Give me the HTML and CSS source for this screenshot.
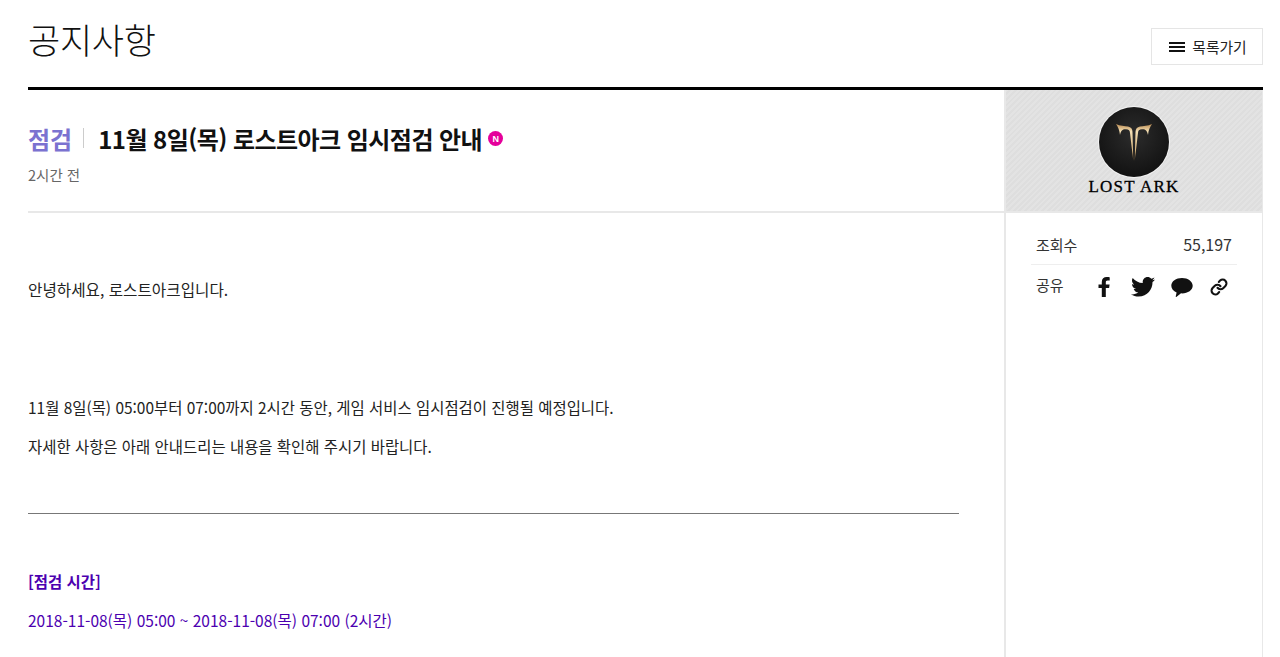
FILE: index.html
```html
<!DOCTYPE html>
<html lang="ko">
<head>
<meta charset="utf-8">
<title>공지사항</title>
<link rel="stylesheet" href="styles.css">
</head>
<body>
<div class="page">
  <header class="top">
    <h1 class="page-title">공지사항</h1>
    <a class="list-btn" href="#">
      <svg class="menu-icon" width="16" height="12" viewBox="0 0 16 12"><path d="M0 1h16v2H0zM0 5h16v2H0zM0 9h16v2H0z" fill="#111"/></svg>
      <span>목록가기</span>
    </a>
  </header>
  <div class="layout">
    <main class="main">
      <div class="article-head">
        <div class="title-row">
          <span class="category">점검</span>
          <span class="title-sep"></span>
          <h2 class="title">11월 8일(목) 로스트아크 임시점검 안내</h2>
          <span class="new-badge">N</span>
        </div>
        <div class="time">2시간 전</div>
      </div>
      <article class="article">
        <p class="p first">안녕하세요, 로스트아크입니다.</p>
        <p class="p gap">11월 8일(목) 05:00부터 07:00까지 2시간 동안, 게임 서비스 임시점검이 진행될 예정입니다.</p>
        <p class="p">자세한 사항은 아래 안내드리는 내용을 확인해 주시기 바랍니다.</p>
        <hr class="rule">
        <p class="p purple strong">[점검 시간]</p>
        <p class="p purple date">2018-11-08(목) 05:00 ~ 2018-11-08(목) 07:00 (2시간)</p>
      </article>
    </main>
    <aside class="side">
      <div class="logo-box">
        <div class="logo-circle">
          <svg width="36" height="38" viewBox="0 0 36 38">
            <defs><linearGradient id="gold" x1="0" y1="0" x2="0" y2="1"><stop offset="0" stop-color="#b98a50"/><stop offset=".2" stop-color="#f5e0b5"/><stop offset=".75" stop-color="#d8b47c"/><stop offset="1" stop-color="#7a5a30"/></linearGradient></defs>
            <path d="M0 1C4 3 9 3 12 3.500 15 4 16.500 6 16.500 9L17.300 38 14 10C13.800 7.500 13 6.500 10 6.300 7 6 5 7 4 12 3.500 7 2 4 0 1zM36 1C32 3 27 3 24 3.500 21 4 19.500 6 19.500 9L18.700 38 22 10C22.200 7.500 23 6.500 26 6.300 29 6 31 7 32 12 32.500 7 34 4 36 1z" fill="url(#gold)"/>
          </svg>
        </div>
        <div class="logo-text">LOST ARK</div>
      </div>
      <div class="stats">
        <div class="stat-row views">
          <span>조회수</span>
          <span class="num">55,197</span>
        </div>
        <div class="stat-row share">
          <span>공유</span>
          <div class="share-icons">
            <svg class="ic-fb" width="13" height="20" viewBox="0 0 13 20"><path d="M3.800 20v-9H.5V7.500h3.300V5c0-3.200 2-5 4.900-5 1.400 0 2.600.1 3 .2v3.400h-2c-1.600 0-1.900.8-1.900 1.900v2h3.800l-.5 3.500H7.800v9z" fill="#111"/></svg>
            <svg class="ic-tw" width="24" height="20" viewBox="0 0 24 20"><path d="M24 2.400c-.9.400-1.800.7-2.800.8 1-.6 1.800-1.600 2.200-2.700-1 .6-2 1-3.100 1.200C19.300.7 18 0 16.600 0c-2.700 0-4.900 2.200-4.900 4.900 0 .4 0 .8.100 1.100C7.700 5.800 4.100 3.900 1.700.9 1.200 1.600 1 2.500 1 3.400c0 1.700.9 3.200 2.200 4.100-.8 0-1.600-.2-2.200-.6v.1c0 2.400 1.700 4.400 3.900 4.800-.4.100-.8.200-1.300.2-.3 0-.6 0-.9-.1.600 2 2.400 3.400 4.600 3.400-1.700 1.300-3.800 2.100-6.100 2.100-.4 0-.8 0-1.200-.1C2.200 18.800 4.800 19.600 7.500 19.600c9.100 0 14-7.500 14-14v-.6c1-.7 1.800-1.600 2.500-2.600z" fill="#111"/></svg>
            <svg class="ic-talk" width="22" height="20" viewBox="0 0 22 20"><path d="M11 1C5 1 .3 4.400.3 8.700c0 2.900 2.100 5.400 5.300 6.700L4.700 19.500c-.1.400.3.600.6.400l4.700-3.600c.3 0 .700.100 1 .100 6 0 10.700-3.500 10.700-7.700S17 1 11 1z" fill="#111"/></svg>
            <svg class="ic-link" width="18" height="18" viewBox="0 0 24 24"><g fill="none" stroke="#111" stroke-width="2.800" stroke-linecap="round" stroke-linejoin="round"><path d="M10 13a5 5 0 0 0 7.540.54l3-3a5 5 0 0 0-7.070-7.070l-1.720 1.710"/><path d="M14 11a5 5 0 0 0-7.540-.54l-3 3a5 5 0 0 0 7.070 7.070l1.710-1.710"/></g></svg>
          </div>
        </div>
      </div>
    </aside>
  </div>
</div>
</body>
</html>
```
FILE: styles.css
```css
* { box-sizing: border-box; }
html, body { margin: 0; padding: 0; height: 657px; overflow: hidden; background: #fff; }
body { font-family: "Noto Sans CJK KR", "Noto Sans", sans-serif; color: #222; }
.page { padding: 0 17px 0 28px; }
.top { display: flex; justify-content: space-between; height: 90px; border-bottom: 3px solid #000; }
.page-title { margin: 14px 0 0; font-size: 35px; font-weight: 300; line-height: 50px; letter-spacing: -.3px; color: #111; }
.list-btn { display: flex; align-items: center; justify-content: center; gap: 7px; width: 112px; height: 37px; margin-top: 28px; padding-left: 2px; border: 1px solid #e5e5e5; font-size: 14.800px; color: #222; text-decoration: none; }
.layout { display: flex; align-items: stretch; height: 567px; overflow: hidden; }
.main { width: 976px; }
.article-head { height: 123px; padding-top: 31px; border-bottom: 2px solid #e8e8e8; }
.title-row { display: flex; align-items: center; height: 34px; }
.category { font-size: 24px; font-weight: 700; color: #7b72d0; }
.title-sep { width: 1px; height: 20px; margin: 0 14px 0 11px; background: #ccc; }
.title { margin: 0; font-size: 24px; font-weight: 700; color: #111; letter-spacing: -.55px; }
.new-badge { display: flex; align-items: center; justify-content: center; width: 15px; height: 15px; margin-left: 6px; margin-top: 1px; border-radius: 50%; background: #e5009b; color: #fff; font-size: 9px; font-weight: 900; font-family: "Liberation Sans", sans-serif; }
.time { margin-top: 10px; font-size: 14.500px; line-height: 20px; color: #666; }
.article { width: 931px; padding-top: 66px; }
.p { margin: 0 0 17px; font-size: 15.450px; line-height: 22px; color: #222; }
.first { font-size: 15.650px; }
.gap { margin-top: 95px; }
.rule { height: 1px; margin: 56px 0 56px; border: 0; background: #777; }
.purple { color: #4c00b0; }
.date { font-size: 15.500px; }
.strong { font-weight: 700; }
.side { width: 259px; border-left: 2px solid #e8e8e8; border-right: 1px solid #e8e8e8; }
.logo-box { display: flex; flex-direction: column; align-items: center; height: 123px; padding-top: 17px; border-bottom: 2px solid #e8e8e8; background: repeating-linear-gradient(135deg, #e3e3e3 0 2px, #dedede 2px 4px); }
.logo-circle { display: flex; align-items: center; justify-content: center; width: 70px; height: 70px; border-radius: 50%; background: radial-gradient(circle at 50% 40%, #2c2c2c, #0a0a0a); box-shadow: 0 0 0 1px #f3f3f3; }
.logo-text { margin-top: 1px; font-family: "Liberation Serif", serif; font-size: 17px; line-height: 18px; letter-spacing: 1.200px; color: #000; -webkit-text-stroke: .3px #000; }
.stats { padding: 0 25px; }
.stat-row { display: flex; justify-content: space-between; align-items: center; font-size: 15px; color: #333; }
.views { height: 52px; padding: 12px 5px 1px 5px; border-bottom: 1px solid #eee; }
.num { font-size: 16px; }
.share { height: 44px; padding: 0 5px 6px 5px; }
.share-icons { display: flex; align-items: center; gap: 16px; margin-right: 4px; margin-top: 5px; }
.ic-fb { margin-right: 4px; }
.ic-link { margin-left: 1px; }
```
